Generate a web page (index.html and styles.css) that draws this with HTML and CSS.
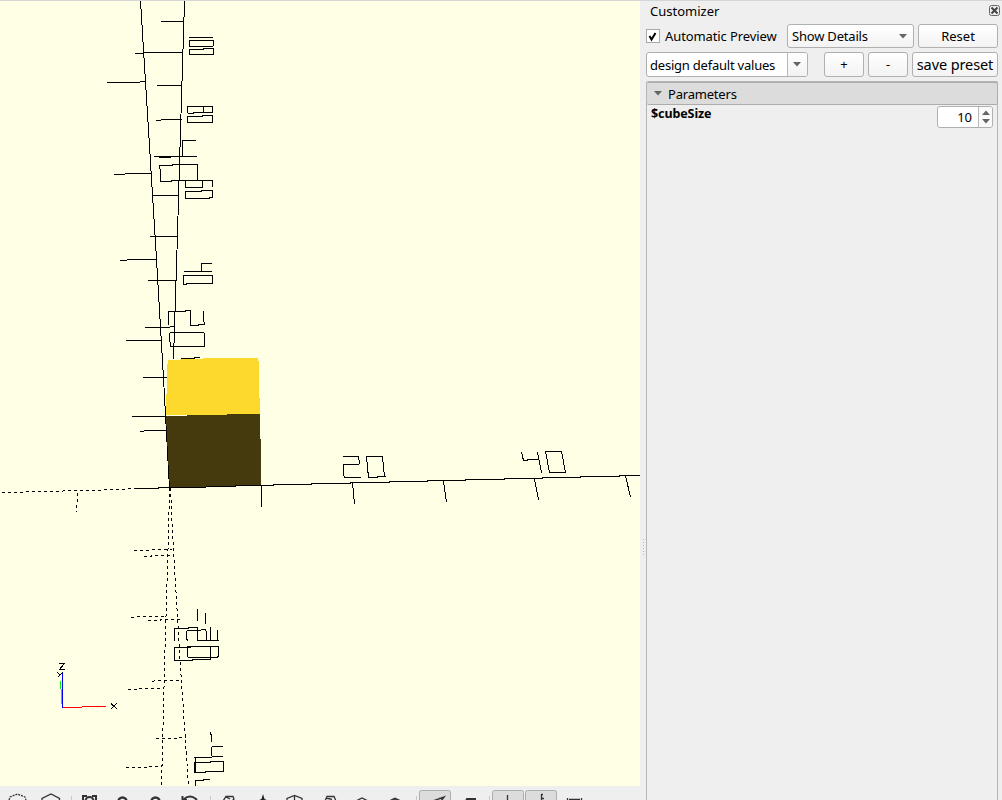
FILE: index.html
```
<!DOCTYPE html>
<html lang="en">
<head>
<meta charset="utf-8">
<title>Customizer</title>
<link rel="stylesheet" href="styles.css">
</head>
<body>
<div class="window">
  <main class="workspace">
    <svg class="viewport" width="640" height="785" viewBox="0 1 640 785" shape-rendering="crispEdges">
      <!-- solid axes -->
      <path class="line" d="M140.5 1L148.5 130L156.5 259L163.5 378L169.5 488M184.5 1L180.5 130L177 250L173.5 359"/>
      <!-- negative axes -->
      <path class="line dash" d="M169.5 488L168.5 533L164.5 667L161.5 786M170.5 488L172.5 533L180.5 667L188.5 786M2 492.5L44 491.5L82 490.5L122 489.5L134 488.5"/>
      <path class="line dash" d="M77.5 493L76.5 512M134 550.5L166 549.5H172M144 556.5H151V555.5H173M131 617.5L139 616.5H166M148 620.5H160V619.5H180M152 681.5L156 680.5H181M128 689.5H136V688.5H164M156 738.5H176V737.5H186M126 767.5H146V766.5H162"/>
      <!-- vertical axis ticks -->
      <path class="line" d="M161 21.5H184M135 53.5H143M143 52.5H183M107 82.5H140M140 81.5H145M157 85.5H182M156 120.5H161M161 119.5H182M154 156.5H197M159 157.5H171M114 174.5H125M125 173.5H151M152 195.5H179M150 236.5H178M120 260.5H127M127 259.5H157M148 280.5H177M145 327.5H170M170 326.5H174M126 340.5H162M143 377.5H167M132 416.5H166M140 431.5H144M144 430.5H167"/>
      <!-- vertical axis labels -->
      <path class="line" d="M189 37.5H213M189.5 40.5H213.5V45.5L212.5 46.5H189.5ZM189.5 49.5H203V48.5H213.5V54.5H189.5Z"/>
      <path class="line" d="M187.5 106.5H212.5V112.5H193V113.5H188.5L187.5 112.5ZM203.5 106.5V112.5M187.5 116.5H202V115.5H212.5V122.5H187.5Z"/>
      <path class="line" d="M196 140.5H182.5V156M159.5 165.5H172.5V164.5H197.5V180.5H171V181.5H160.5V169.5L159.5 168.5ZM197 180.5H212.5V187M185.5 180.5H202.5V187.5H185.5ZM185.5 191.5H201V190.5H212.5V197.5H209V198.5H185.5Z"/>
      <path class="line" d="M184 271.5H212M201.5 271V263.5H212M183.5 275.5H212.5V283.5H186V284.5H183.5Z"/>
      <path class="line" d="M169.5 325.5L168.5 324.5V311.5H185V310.5H190.5V325.5H198V324.5H204.5V322.5L203.5 321.5V311M169.5 332.5H203.5V331.5M204.5 333V346.5H170.5V342.5L169.5 341.5V332.5M181 358.5H194V357.5H200M211 358.5H212"/>
      <!-- cube -->
      <path class="face-top" d="M168 360L215 358L257 357.5H258V361H259V398H260V415H166V394H167V364H168Z"/>
      <path class="face-front" d="M166 416H187V415H227V414H260V439H261V485.5L170 487.5L169 475Z"/>
      <path class="line" d="M134 488.5H158V487.5H178L235 486.5V485.5H273V484.5H311V483.5H350V482.5H389V481.5H427V480.5H465V479.5H504V478.5H542V477.5H580V476.5H619V475.5H640"/>
      <path class="line" d="M261.5 485V507M352.5 483L354.500 504M443.500 481L446.500 502M534.500 479L538.500 500M625.500 476L630.500 497"/>
      <!-- horizontal axis labels -->
      <path class="line" d="M343 456.5H358.5L359.5 463.5L358.5 464.5H343.5V474L344.5 477.5H361M366.5 456.5H382.5L384.5 476.5M386 476.5H377V477.5H368.5L366.5 456.5M382.5 455.500V457M521.5 452L523.5 460.5H527V459.5H539M537.5 452L541.5 473M545.5 451.5H561.5L565.5 472.5H549.5Z"/>
      <!-- lower labels -->
      <path class="line" d="M197.5 609V621M205.5 613V624M174.5 641V628.5H188V627.5H197.5V640.5H219M187.5 641L186.5 638V631.5L187.5 630.5H200L202 629.5H205.5L206.5 633V640M210.5 627V640M217.5 630V640M191 647.5H174.5V660.5H192V659.5H210.5V646.5M187.5 646.5H218.5V656.5H217V657.5H188.5L187.5 656.5Z"/>
      <path class="line" d="M210.5 732V735M211.5 734V742M223 746.5H212.5L211.5 748V755L212.5 756.5H223M194 757.5H212M194.5 762.5H210V761.5H223.5V771.5H205V772.5H194.5ZM195.5 757V772M195.5 786V780.5H203V779.5H210"/>
      <!-- orientation gizmo -->
      <path class="line axis-y" d="M60.5 681V689M61.5 689V704"/>
      <path class="line axis-z" d="M62.5 672V708"/>
      <path class="line axis-x" d="M63 707.5H82M82 706.5H106"/>
      <path class="line" d="M59 663.5H64.500L59.500 669.5H65M57.5 672.5L60.5 675.5M62.5 672.5L57.5 677.5M111 703.5L117 709M117 703L111 709"/>
    </svg>
    <svg class="toolbar" width="640" height="14" viewBox="0 786 640 14">
      <g class="sep"><path d="M71.5 796V800M210.5 796V800M416.5 796V800M489.5 796V800"/></g>
      <g class="pressed">
        <rect x="419.500" y="790.500" width="31" height="20" rx="2"/>
        <rect x="492.500" y="790.500" width="31" height="20" rx="2"/>
        <rect x="525.500" y="790.500" width="31" height="20" rx="2"/>
      </g>
      <g class="icon">
        <path stroke-dasharray="2 1" d="M9 800L10 797L17.500 794L25 797L26 800"/>
        <path d="M42 801V798.500L51 794L59.500 798.500V801"/>
        <path stroke-width="2" d="M83 800V796H87M92 796H96V800"/>
        <circle cx="89.500" cy="801" r="4" stroke-width="2"/>
        <circle cx="122.500" cy="801.500" r="4" stroke-width="2.500"/>
        <circle cx="155.500" cy="801.500" r="4" stroke-width="2.500"/>
        <path stroke-width="2" d="M182.500 796V800H187M184 799Q190 794 196 799L197 801"/>
        <path d="M223 801L226 796.500H233L234 799L232 801M226 797L230 799"/>
        <path class="solid" d="M257 801L261.500 799L263 794L264.500 799L269 801Z"/>
        <path d="M287 801V798.500L294.500 795.500L302 798.500V801M294.500 795V801"/>
        <path d="M325 801L327 796.500H334L336 801M326 798L332 799.500"/>
        <path d="M356 801L362 798L368 801"/>
        <path stroke-width="2" d="M389 801.500L395 798.500L401 801.500"/>
        <path stroke-width="1.500" d="M433 801L444 797L441 801M440 798L437 801"/>
        <path stroke-width="2" d="M466 801L467 799H475V801"/>
        <path d="M507.500 795V801M541.500 794V801M541 794.500H543M541 798.500H544"/>
        <path d="M567.500 798V801M581.500 798V801M569 799.500H580"/>
      </g>
    </svg>
  </main>
  <div class="splitter"><i></i><i></i><i></i><i></i><i></i><i></i></div>
  <aside class="panel">
    <header class="title">
      <span>Customizer</span>
      <svg width="11" height="11" viewBox="0 0 11 11"><rect class="close-box" x=".5" y=".5" width="10" height="10" rx="2"/><path class="close-x" d="M2.500 2.500L8.500 8.500M8.500 2.500L2.500 8.500"/></svg>
    </header>
    <div class="row row-one">
      <span class="check"><svg width="13" height="13" viewBox="0 0 13 13"><path d="M3.500 6L5.500 9.500L9.500 3"/></svg></span>
      <span class="auto">Automatic Preview</span>
      <div class="button details"><span>Show Details</span><svg width="8" height="5" viewBox="0 0 8 5"><path d="M0 0H8L4 4.500Z"/></svg></div>
      <div class="button reset">Reset</div>
    </div>
    <div class="row row-two">
      <div class="combo"><span class="combo-text">design default values</span><span class="combo-arrow"><svg width="8" height="5" viewBox="0 0 8 5"><path d="M0 0H8L4 4.500Z"/></svg></span></div>
      <div class="button small plus">+</div>
      <div class="button small">-</div>
      <div class="button save">save preset</div>
    </div>
    <section class="params">
      <div class="group"><svg width="8" height="5" viewBox="0 0 8 5"><path d="M0 0H8L4 4.500Z"/></svg><span>Parameters</span></div>
      <div class="param">
        <span class="name">$cubeSize</span>
        <div class="spin"><span class="value">10</span><span class="arrows"><svg width="8" height="14" viewBox="0 0 8 14"><path d="M0 5L4 .5L8 5ZM0 9H8L4 13.500Z"/></svg></span></div>
      </div>
    </section>
  </aside>
</div>
</body>
</html>
```
FILE: styles.css
```
* { box-sizing: border-box; }
body { margin: 0; background: #efefef; color: #000; font: 13px/18px "Noto Sans", "Open Sans", sans-serif; }
.window { display: flex; width: 1002px; height: 800px; overflow: hidden; border-top: 1px solid #d5d5d5; white-space: nowrap; }
.workspace { width: 640px; }
.viewport, .toolbar { display: block; }
.viewport { background: #ffffe5; }
.line { fill: none; stroke: #000; stroke-width: 1; }
.dash { stroke-dasharray: 3 3; }
.face-top { fill: #fdd82d; }
.face-front { fill: #443a0d; }
.axis-x { stroke: #f00; }
.axis-y { stroke: #0f0; }
.axis-z { stroke: #00f; }
.sep { stroke: #c8c8c8; }
.pressed { fill: #dcdcdc; stroke: #acacac; }
.icon { fill: none; stroke: #333; stroke-width: 1.3; }
.solid { fill: #222; stroke: none; }
.splitter { width: 6px; padding: 538px 0 0 3px; display: flex; flex-direction: column; gap: 2px; }
.splitter i { width: 1px; height: 1px; background: #b5b5b5; }
.panel { width: 356px; display: flex; flex-direction: column; }
.title { height: 22px; display: flex; justify-content: space-between; padding: 1px 2px 0 4px; }
.title svg { margin: 3px 0 0; }
.close-box { fill: none; stroke: #666; }
.close-x { stroke: #444; stroke-width: 2; }
.row { display: flex; align-items: center; padding-left: 0; }
.row-one { height: 26px; }
.row-two { height: 30px; }
.check { width: 14px; height: 14px; border: 1px solid #aaa; background: #fff; display: flex; }
.check svg { flex: none; margin: -.5px 0 0 -1px; }
.check path { fill: none; stroke: #000; stroke-width: 2; }
.auto { width: 122px; margin-left: 5px; letter-spacing: -.1px; }
.button { height: 24px; border: 1px solid #b0b0b0; border-radius: 3px; background: linear-gradient(#fff, #f3f3f3); display: flex; align-items: center; justify-content: center; }
.details { width: 127px; justify-content: space-between; padding: 0 6px 0 4px; letter-spacing: -.2px; }
.reset { width: 80px; margin-left: 4px; }
.details svg, .combo svg, .group svg, .spin svg { fill: #646464; }
.combo { width: 162px; height: 25px; display: flex; border: 1px solid #b0b0b0; border-radius: 3px; background: #fff; overflow: hidden; }
.combo-text { width: 140px; padding: 3px 0 0 3px; letter-spacing: -.22px; }
.combo-arrow { flex: 1; border-left: 1px solid #b8b8b8; background: linear-gradient(#fff, #f2f2f2); display: flex; align-items: center; justify-content: center; padding-right: 1px; }
.small, .save { height: 25px; }
.small { width: 40px; margin-right: 4px; }
.plus { margin-left: 16px; }
.save { width: 86px; font-size: 14.500px; letter-spacing: -.1px; }
.params { flex: 1; width: 352px; margin-top: 2px; border: 1px solid #b5b5b5; border-bottom: 0; border-radius: 2px 2px 0 0; }
.group { height: 23px; margin-right: -1px; border: 1px solid #acacac; border-width: 1px 1px 1px 0; border-radius: 2px; background: #dcdcdc; display: flex; align-items: center; gap: 6px; padding: 0 0 0 7px; letter-spacing: -.2px; }
.group svg { margin-top: -1px; }
.param { display: flex; justify-content: space-between; padding: 1px 4px 0 4px; }
.name { font-weight: 700; font-size: 12.500px; letter-spacing: -.1px; margin-top: -1px; }
.spin { width: 56px; height: 22px; display: flex; border: 1px solid #b0b0b0; border-radius: 3px; background: #fff; overflow: hidden; }
.value { width: 40px; padding: 1px 6px 0 0; text-align: right; }
.arrows { flex: 1; border-left: 1px solid #b8b8b8; display: flex; align-items: center; justify-content: center; background: #fafafa; }
```
